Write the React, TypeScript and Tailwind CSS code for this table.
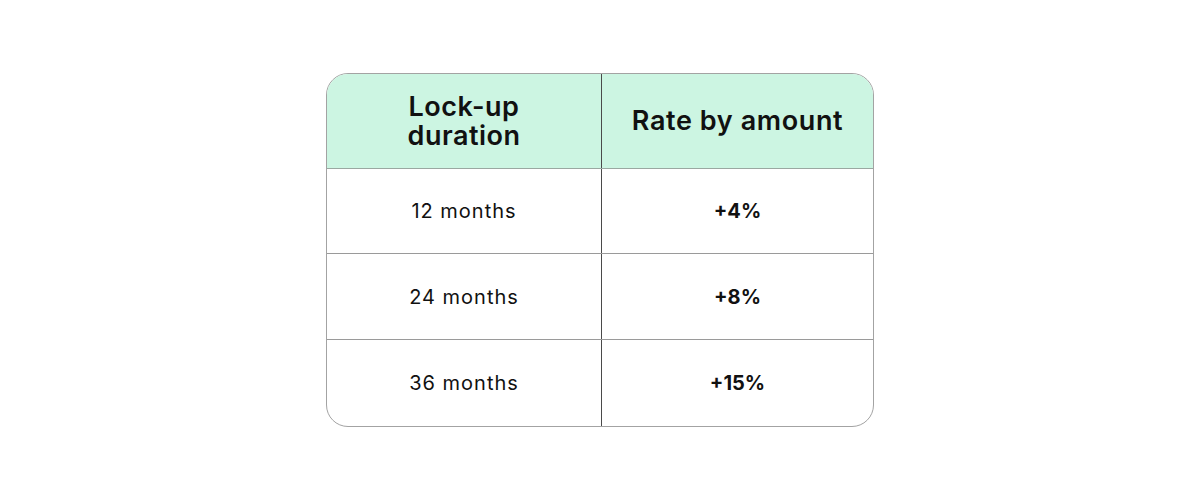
import React from "react";

const rows = [
  { d: "12 months", r: "+4%" },
  { d: "24 months", r: "+8%" },
  { d: "36 months", r: "+15%" },
];

export default function App() {
  return (
    <div
      className="w-[1200px] h-[500px] bg-white flex justify-center pt-[73px]"
      style={{ fontFamily: "Inter, 'Noto Sans', sans-serif" }}
    >
      <div className="w-[548px] h-[354px] border border-[#a3a3a3] rounded-[22px] overflow-hidden flex flex-col text-[#111]">
        <div className="flex h-[95px] bg-[#ccf5e2] border-b border-[#9aa8a1]">
          <div className="w-[275px] flex flex-col items-center justify-center text-center text-[27px] font-semibold leading-[29px] tracking-[0.5px] border-r border-[#4a4a4a]">
            <span>Lock-up</span>
            <span>duration</span>
          </div>
          <div className="flex-1 flex items-center justify-center text-[27px] font-semibold tracking-[0.6px]">
            Rate by amount
          </div>
        </div>
        {rows.map((row, i) => (
          <div
            key={i}
            className={`flex h-[86px] ${i < rows.length - 1 ? "border-b border-[#9a9a9a]" : ""}`}
          >
            <div className="w-[275px] flex items-center justify-center text-[20px] tracking-[1px] border-r border-[#4a4a4a]">
              {row.d}
            </div>
            <div className="flex-1 flex items-center justify-center text-[20px] font-bold">
              {row.r}
            </div>
          </div>
        ))}
      </div>
    </div>
  );
}
